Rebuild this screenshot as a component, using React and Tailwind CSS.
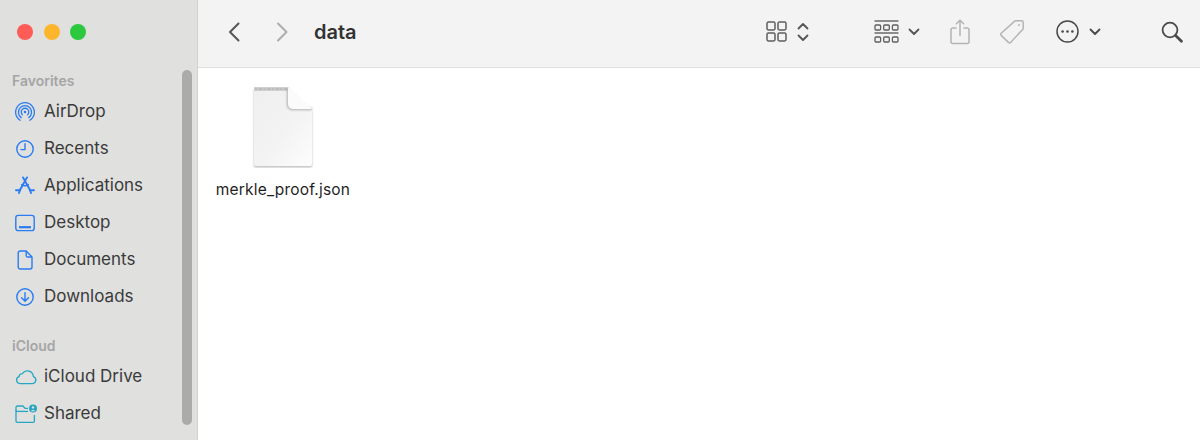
import React from "react";

const blue = "#2b7bf2";
const teal = "#27a6c2";

// --- Sidebar icons ---
const AirDropIcon = () => (
  <svg width="20" height="20" viewBox="0 0 20 20" fill="none" stroke={blue} strokeWidth="1.3" strokeLinecap="round">
    <path d="M5.2 18.2A9.4 9.4 0 1 1 14.8 18.2" />
    <path d="M6.2 15.6A6.6 6.6 0 1 1 13.8 15.6" />
    <path d="M7.4 12.8A3.8 3.8 0 1 1 12.6 12.8" />
    <circle cx="10" cy="10" r="1.3" fill={blue} stroke="none" />
  </svg>
);

const ClockIcon = () => (
  <svg width="20" height="20" viewBox="0 0 20 20" fill="none" stroke={blue} strokeWidth="1.4" strokeLinecap="round" strokeLinejoin="round">
    <circle cx="10" cy="10" r="8.2" />
    <path d="M10 4.8V10.6H6" />
  </svg>
);

const AppsIcon = () => (
  <svg width="20" height="20" viewBox="0 0 20 20" fill="none" stroke={blue} strokeLinecap="round">
    <path d="M8 1.4L14.6 13.2L16 17" strokeWidth="1.9" />
    <path d="M12 1.4L5.4 13.2L4 17" strokeWidth="1.9" />
    <path d="M1 14.2H5M15 14.2H19" strokeWidth="1.9" />
    <path d="M6.6 8.6C8.4 9.8 11.6 9.8 13.4 8.6" strokeWidth="1.4" />
  </svg>
);

const DesktopIcon = () => (
  <svg width="20" height="20" viewBox="0 0 20 20" fill="none" stroke={blue} strokeWidth="1.4">
    <rect x="0.8" y="2.4" width="18.4" height="15.2" rx="2.4" />
    <path d="M4 14.2H16" strokeWidth="2.2" />
  </svg>
);

const DocIcon = () => (
  <svg width="20" height="20" viewBox="0 0 20 20" fill="none" stroke={blue} strokeWidth="1.4" strokeLinejoin="round">
    <path d="M5.2 1H11.2L17 7V17A2 2 0 0 1 15 19H5.2A2 2 0 0 1 3.2 17V3A2 2 0 0 1 5.2 1Z" />
    <path d="M11.2 1V5.4A1.6 1.6 0 0 0 12.8 7H17" />
  </svg>
);

const DownloadIcon = () => (
  <svg width="20" height="20" viewBox="0 0 20 20" fill="none" stroke={blue} strokeWidth="1.4" strokeLinecap="round" strokeLinejoin="round">
    <circle cx="10" cy="10" r="8.2" />
    <path d="M10 5.6V14M6.6 10.8L10 14.2L13.4 10.8" />
  </svg>
);

const CloudIcon = () => (
  <svg width="22" height="20" viewBox="0 0 22 20" fill="none" stroke={teal} strokeWidth="1.3" strokeLinejoin="round">
    <path d="M5 16.6H17.4A3.6 3.6 0 0 0 18.4 9.6A6 6 0 0 0 7.4 6.6A3.4 3.4 0 0 0 4 9.6A3.6 3.6 0 0 0 5 16.6Z" />
  </svg>
);

const SharedIcon = () => (
  <svg width="22" height="20" viewBox="0 0 22 20" fill="none" stroke={teal} strokeWidth="1.3" strokeLinejoin="round">
    <path d="M1 6V17A1.4 1.4 0 0 0 2.4 18.4H18A1.4 1.4 0 0 0 19.4 17V11" />
    <path d="M1 7V3.4A1.4 1.4 0 0 1 2.4 2H8L10 4.4H13" />
    <path d="M1 7.4H13" />
    <circle cx="18" cy="4.6" r="4" fill={teal} stroke="none" />
    <circle cx="18" cy="3.4" r="1.2" fill="#e0e0df" stroke="none" />
    <path d="M15.8 7.2A2.4 2 0 0 1 20.2 7.2Z" fill="#e0e0df" stroke="none" />
  </svg>
);

// --- Toolbar icons ---
const Chevron = ({ d, color, width = 13, height = 22, stroke = 2 }) => (
  <svg width={width} height={height} viewBox={`0 0 ${width} ${height}`} fill="none" stroke={color} strokeWidth={stroke} strokeLinecap="round" strokeLinejoin="round">
    <path d={d} />
  </svg>
);

const GridIcon = () => (
  <svg width="21" height="21" viewBox="0 0 21 21" fill="none" stroke="#5f5f5f" strokeWidth="1.5">
    <rect x="1" y="1" width="8" height="8" rx="1.4" />
    <rect x="12" y="1" width="8" height="8" rx="1.4" />
    <rect x="1" y="12" width="8" height="8" rx="1.4" />
    <rect x="12" y="12" width="8" height="8" rx="1.4" />
  </svg>
);

const UpDownIcon = () => (
  <svg width="12" height="20" viewBox="0 0 12 20" fill="none" stroke="#555" strokeWidth="1.8" strokeLinecap="round" strokeLinejoin="round">
    <path d="M1.5 6.5L6 2L10.5 6.5" />
    <path d="M1.5 13.5L6 18L10.5 13.5" />
  </svg>
);

const GroupIcon = () => (
  <svg width="25" height="24" viewBox="0 0 25 24" fill="none" stroke="#5f5f5f" strokeWidth="1.3">
    <path d="M0.5 1H24.5" strokeWidth="1.4" />
    <rect x="1" y="5" width="5.6" height="5" rx="1" />
    <rect x="9.7" y="5" width="5.6" height="5" rx="1" />
    <rect x="18.4" y="5" width="5.6" height="5" rx="1" />
    <path d="M0.5 13H24.5" strokeWidth="1.4" />
    <rect x="1" y="17" width="5.6" height="5" rx="1" />
    <rect x="9.7" y="17" width="5.6" height="5" rx="1" />
    <rect x="18.4" y="17" width="5.6" height="5" rx="1" />
  </svg>
);

const ShareIcon = () => (
  <svg width="20" height="26" viewBox="0 0 20 26" fill="none" stroke="#b4b4b4" strokeWidth="1.5" strokeLinecap="round" strokeLinejoin="round">
    <path d="M6 9H3A2 2 0 0 0 1 11V22.4A2 2 0 0 0 3 24.4H17A2 2 0 0 0 19 22.4V11A2 2 0 0 0 17 9H14" />
    <path d="M10 16.5V1.4M6.4 4.8L10 1.2L13.6 4.8" />
  </svg>
);

const TagIcon = () => (
  <svg width="26" height="26" viewBox="0 0 26 26" fill="none" stroke="#b4b4b4" strokeWidth="1.5" strokeLinejoin="round">
    <path d="M15.4 2.4A2 2 0 0 1 16.8 1.8L22.6 1.8A1.6 1.6 0 0 1 24.2 3.4V9.2A2 2 0 0 1 23.6 10.6L11.6 23.4A1.6 1.6 0 0 1 9.4 23.4L2.2 16.4A1.6 1.6 0 0 1 2.2 14.2Z" />
    <circle cx="20" cy="6" r="1" fill="#b4b4b4" stroke="none" />
  </svg>
);

const MoreIcon = () => (
  <svg width="23" height="23" viewBox="0 0 23 23" fill="none" stroke="#4a4a4a" strokeWidth="1.5">
    <circle cx="11.5" cy="11.5" r="10.5" />
    <circle cx="6.6" cy="11.5" r="1.3" fill="#4a4a4a" stroke="none" />
    <circle cx="11.5" cy="11.5" r="1.3" fill="#4a4a4a" stroke="none" />
    <circle cx="16.4" cy="11.5" r="1.3" fill="#4a4a4a" stroke="none" />
  </svg>
);

const SearchIcon = () => (
  <svg width="22" height="22" viewBox="0 0 22 22" fill="none" stroke="#4a4a4a" strokeLinecap="round">
    <circle cx="9" cy="9" r="7.4" strokeWidth="1.8" />
    <path d="M14.6 14.6L20.4 20.2" strokeWidth="2.8" />
  </svg>
);

const FileIcon = () => (
  <svg width="62" height="82" viewBox="0 0 62 82" fill="none">
    <defs>
      <linearGradient id="sheet" x1="0" y1="0" x2="1" y2="1">
        <stop offset="0" stopColor="#efefef" />
        <stop offset="0.55" stopColor="#f3f3f3" />
        <stop offset="1" stopColor="#fdfdfd" />
      </linearGradient>
      <filter id="soft" x="-30%" y="-30%" width="160%" height="160%">
        <feGaussianBlur stdDeviation="1" />
      </filter>
    </defs>
    {/* sheet with a soft shadow under it */}
    <path d="M2 2H36L60 24V78A2 2 0 0 1 58 80H4A2 2 0 0 1 2 78Z" fill="#bdbdbd" transform="translate(0 1.4)" filter="url(#soft)" />
    <path d="M2 1H36L60 23V78A2 2 0 0 1 58 80H4A2 2 0 0 1 2 78Z" fill="url(#sheet)" />
    {/* top strip */}
    <path d="M2 1H37V5H2Z" fill="#d0d0d0" />
    <path d="M3 3H36" stroke="#b5b5b5" strokeWidth="1.4" strokeDasharray="2 1.4 4 1" />
    {/* fold */}
    <path d="M36 3V19A4 4 0 0 0 40 23H60" stroke="#a9a9a9" strokeWidth="2" filter="url(#soft)" />
    <path d="M36 1L60 23H41A5 5 0 0 1 36 18Z" fill="#fbfbfb" />
  </svg>
);

const favorites = [
  { name: "AirDrop", icon: <AirDropIcon /> },
  { name: "Recents", icon: <ClockIcon /> },
  { name: "Applications", icon: <AppsIcon /> },
  { name: "Desktop", icon: <DesktopIcon /> },
  { name: "Documents", icon: <DocIcon /> },
  { name: "Downloads", icon: <DownloadIcon /> },
];

const icloud = [
  { name: "iCloud Drive", icon: <CloudIcon /> },
  { name: "Shared", icon: <SharedIcon /> },
];

function SidebarRow({ item }) {
  return (
    <div className="flex h-[37px] items-center pl-[15px]">
      <div className="flex w-[29px] shrink-0 items-center">{item.icon}</div>
      <span className="text-[17px] text-[#3a3a3a]">{item.name}</span>
    </div>
  );
}

export default function App() {
  return (
    <div className="flex h-[440px] w-[1200px] overflow-hidden bg-white font-['Inter','Liberation_Sans',sans-serif]">
      {/* Sidebar */}
      <aside className="relative h-full w-[198px] shrink-0 border-r border-[#d2d2d2] bg-[#e0e0df]">
        <div className="flex gap-[10.5px] pl-[17px] pt-[24px]">
          <div className="h-[16px] w-[16px] rounded-full bg-[#fd5c57]" />
          <div className="h-[16px] w-[16px] rounded-full bg-[#fdb52c]" />
          <div className="h-[16px] w-[16px] rounded-full bg-[#2cc83f]" />
        </div>
        <p className="mt-[33px] pl-[12px] text-[14px] font-semibold leading-[16px] text-[#a5a5a5]">Favorites</p>
        <div className="mt-[4px]">
          {favorites.map((item) => (
            <SidebarRow key={item.name} item={item} />
          ))}
        </div>
        <p className="mt-[23px] pl-[12px] text-[14px] font-semibold leading-[16px] text-[#a5a5a5]">iCloud</p>
        <div className="mt-[4px]">
          {icloud.map((item) => (
            <SidebarRow key={item.name} item={item} />
          ))}
        </div>
        {/* Scrollbar overlay */}
        <div className="absolute left-[182px] top-[70px] h-[355px] w-[10px] rounded-full bg-[#ababab]" />
      </aside>

      {/* Main */}
      <main className="flex min-w-0 flex-1 flex-col">
        <header className="flex h-[68px] shrink-0 items-center border-b border-[#e0e0e0] bg-[#f3f3f3] pb-[4px] pl-[30px]">
          <Chevron d="M10.5 2.5L2 11L10.5 19.5" color="#555" />
          <div className="ml-[35px]">
            <Chevron d="M2 2.5L10.5 11L2 19.5" color="#acacac" />
          </div>
          <span className="ml-[25px] text-[20px] font-semibold text-[#333]">data</span>
          <div className="ml-[409px] flex items-center gap-[10px]">
            <GridIcon />
            <UpDownIcon />
          </div>
          <div className="ml-[65px] flex items-center gap-[9px]">
            <GroupIcon />
            <Chevron d="M1.5 1.5L6 6L10.5 1.5" color="#555" width={12} height={8} stroke={1.8} />
          </div>
          <div className="ml-[30px]">
            <ShareIcon />
          </div>
          <div className="ml-[29px]">
            <TagIcon />
          </div>
          <div className="ml-[31px] flex items-center gap-[10px]">
            <MoreIcon />
            <Chevron d="M1.5 1.5L6 6L10.5 1.5" color="#4a4a4a" width={12} height={8} stroke={1.8} />
          </div>
          <div className="ml-[60px]">
            <SearchIcon />
          </div>
        </header>

        <section className="flex-1 pl-[17px] pt-[18px]">
          <div className="flex w-[136px] flex-col items-center">
            <FileIcon />
            <span className="mt-[13px] text-[15.5px] leading-[18px] tracking-[0.2px] text-[#1f1f1f]">merkle_proof.json</span>
          </div>
        </section>
      </main>
    </div>
  );
}
